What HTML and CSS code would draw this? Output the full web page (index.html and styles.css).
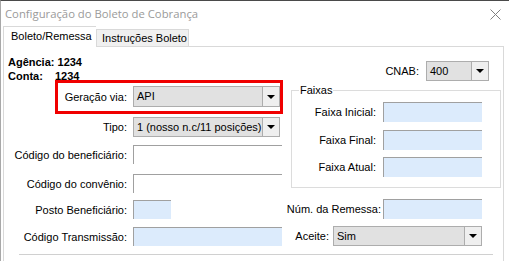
FILE: index.html
```html
<!DOCTYPE html>
<html lang="pt-BR">
<head>
<meta charset="utf-8">
<title>Configuração do Boleto de Cobrança</title>
<link rel="stylesheet" href="styles.css">
</head>
<body>
<div class="window">
  <div class="titlebar">
    <span class="title">Configuração do Boleto de Cobrança</span>
    <svg class="close" width="11" height="11" viewBox="0 0 11 11"><path d="M0.5 0.5 L10.5 10.5 M10.5 0.5 L0.5 10.5" stroke="#808080" stroke-width="1" fill="none"/></svg>
  </div>
  <div class="tabs">
    <div class="tab tab-active">Boleto/Remessa</div>
    <div class="tab">Instruções Boleto</div>
  </div>
  <div class="page">
    <div class="columns">
      <div class="col-left">
        <div class="info">Agência: 1234</div>
        <div class="info"><span class="info-key">Conta:</span>1234</div>
        <div class="row r-geracao">
          <span class="lbl">Geração via:</span>
          <div class="combo combo-left h21"><span class="combo-text">API</span><span class="combo-btn"><span class="tri"></span></span></div>
        </div>
        <div class="row r-tipo">
          <span class="lbl">Tipo:</span>
          <div class="combo combo-left"><span class="combo-text">1 (nosso n.c/11 posições)</span><span class="combo-btn"><span class="tri"></span></span></div>
        </div>
        <div class="row r-benef">
          <span class="lbl">Código do beneficiário:</span>
          <div class="edit edit-wide"></div>
        </div>
        <div class="row r-conv">
          <span class="lbl">Código do convênio:</span>
          <div class="edit edit-wide"></div>
        </div>
        <div class="row r-posto">
          <span class="lbl">Posto Beneficiário:</span>
          <div class="edit edit-small blue"></div>
        </div>
        <div class="row r-trans">
          <span class="lbl">Código Transmissão:</span>
          <div class="edit edit-wide blue"></div>
        </div>
      </div>
      <div class="col-right">
        <div class="rrow r-cnab">
          <span class="rlbl">CNAB:</span>
          <div class="combo combo-cnab"><span class="combo-text">400</span><span class="combo-btn"><span class="tri"></span></span></div>
        </div>
        <fieldset class="group">
          <legend class="legend">Faixas</legend>
          <div class="frow f1"><span class="rlbl">Faixa Inicial:</span><div class="edit edit-faixa blue"></div></div>
          <div class="frow f2"><span class="rlbl">Faixa Final:</span><div class="edit edit-faixa blue"></div></div>
          <div class="frow f3"><span class="rlbl">Faixa Atual:</span><div class="edit edit-faixa blue"></div></div>
        </fieldset>
        <div class="rrow r-num">
          <span class="rlbl">Núm. da Remessa:</span>
          <div class="edit edit-faixa blue"></div>
        </div>
        <div class="rrow r-aceite">
          <span class="rlbl">Aceite:</span>
          <div class="combo combo-aceite"><span class="combo-text">Sim</span><span class="combo-btn"><span class="tri"></span></span></div>
        </div>
      </div>
    </div>
    <div class="separator"></div>
  </div>
  <div class="highlight"></div>
</div>
</body>
</html>
```

FILE: styles.css
```css
* { box-sizing: border-box; }
html, body { margin: 0; padding: 0; background: #ffffff; }
body { font-family: "Liberation Sans", Arial, sans-serif; font-size: 11px; color: #000; }

.window {
  position: relative;
  width: 509px;
  height: 261px;
  overflow: hidden;
  background: #ffffff;
  border-top: 1px solid #4a4a4a;
  border-left: 1px solid #a8a8a8;
}

.titlebar {
  height: 25px;
  display: flex;
  align-items: center;
  justify-content: space-between;
  padding: 0 8px 1px 4px;
}
.title {
  font-family: "Open Sans", "Noto Sans", sans-serif;
  font-size: 11.3px;
  color: #9a9a9a;
  letter-spacing: 0;
}
.close { display: block; margin-top: 2px; }

.tabs {
  display: flex;
  align-items: flex-end;
  height: 20px;
  margin-left: 2px;
  position: relative;
  z-index: 1;
}
.tab {
  height: 17px;
  width: 93px;
  background: #f0f0f0;
  border: 1px solid #d9d9d9;
  border-bottom: none;
  line-height: 16px;
  padding-left: 5px;
  color: #000;
  white-space: nowrap;
}
.tab-active {
  height: 21px;
  width: 93px;
  background: #ffffff;
  margin-bottom: -1px;
  padding-left: 7px;
  line-height: 18px;
  border-right: none;
}

.page {
  margin-left: 2px;
  margin-right: 5px;
  height: 220px;
  border: 1px solid #d9d9d9;
  border-bottom: none;
  background: #ffffff;
}

.columns { display: flex; }
.col-left { width: 280px; }
.col-right { flex: 1; }

.info {
  font-weight: bold;
  line-height: 14px;
  padding-left: 4px;
}
.info:first-child { margin-top: 8px; }
.info-key { display: inline-block; width: 47px; }

.row { display: flex; align-items: center; gap: 6px; }
.lbl { width: 123px; text-align: right; white-space: nowrap; }
.r-geracao { margin-top: 3px; }
.r-tipo { margin-top: 10px; }
.r-benef { margin-top: 8px; }
.r-conv { margin-top: 10px; }
.r-posto { margin-top: 7px; }
.r-trans { margin-top: 8px; }

.combo {
  display: flex;
  height: 20px;
  background: #e1e1e1;
  border: 1px solid #adadad;
}
.combo.h21 { height: 21px; }
.combo-left { width: 147px; }
.combo-cnab { width: 63px; }
.combo-aceite { width: 149px; }
.combo-text {
  flex: 1;
  padding-left: 3px;
  line-height: 18px;
  white-space: nowrap;
  overflow: hidden;
}
.combo-btn {
  width: 17px;
  background: #efefef;
  border-left: 1px solid #adadad;
  display: flex;
  align-items: center;
  justify-content: center;
}
.tri {
  width: 0;
  height: 0;
  border-left: 4px solid transparent;
  border-right: 4px solid transparent;
  border-top: 4px solid #000;
}

.edit {
  height: 19px;
  background: #ffffff;
  border-top: 1px solid #a0a0a0;
  border-left: 1px solid #a0a0a0;
}
.edit.blue { background: #dcebfc; }
.edit-wide { width: 149px; }
.edit-small { width: 38px; }
.edit-faixa { width: 99px; height: 20px; }

.rrow { display: flex; align-items: center; justify-content: flex-end; }
.rlbl { white-space: nowrap; }
.r-cnab { margin-top: 14px; padding-right: 14px; gap: 7px; }
.r-num { margin-top: 11px; padding-right: 21px; gap: 2px; }
.r-aceite { margin-top: 7px; padding-right: 21px; gap: 4px; }

.group {
  margin: 3px 2px 0 7px;
  padding: 0 18px 10px 0;
  border: 1px solid #dcdcdc;
  min-width: 0;
}
.legend {
  margin-left: 7px;
  padding: 0 1px;
  line-height: 13px;
}
.frow { display: flex; align-items: center; justify-content: flex-end; gap: 7px; }
.f1 { margin-top: 5px; }
.f2 { margin-top: 8px; }
.f3 { margin-top: 7px; }

.separator {
  margin: 8px 0 0 15px;
  width: 474px;
  height: 1px;
  background: #d0d0d0;
}

.highlight {
  position: absolute;
  left: 54px;
  top: 79px;
  width: 228px;
  height: 34px;
  border: 3px solid #f00000;
}
```
